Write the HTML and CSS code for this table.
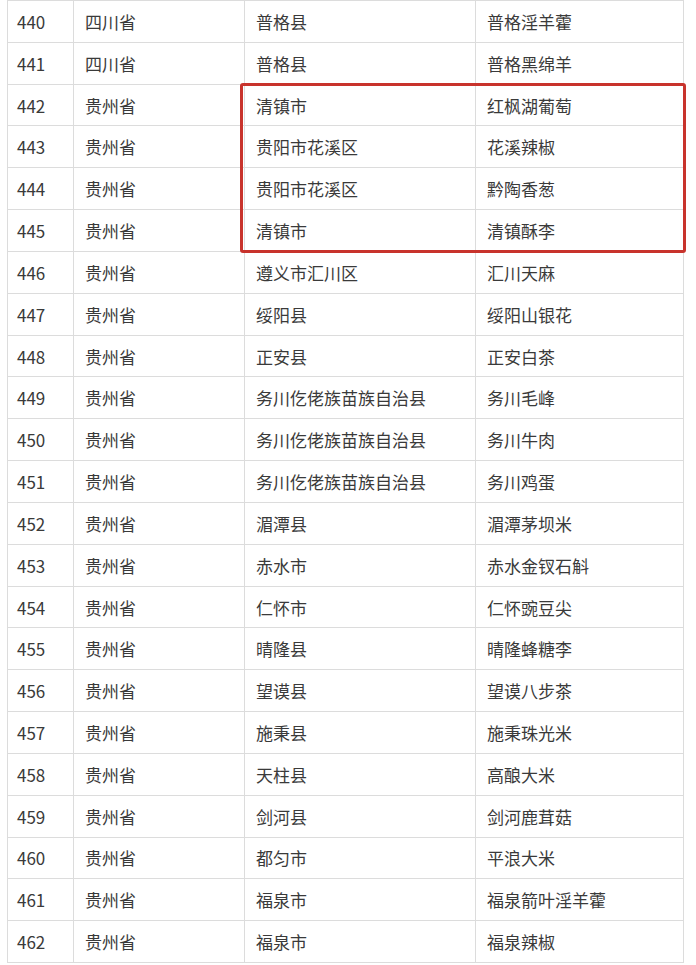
FILE: index.html
```html
<!DOCTYPE html>
<html lang="zh-CN">
<head>
<meta charset="utf-8">
<link rel="stylesheet" href="styles.css">
</head>
<body>
<div class="wrap">
<table class="grid">
<colgroup><col class="c1"><col class="c2"><col class="c3"><col class="c4"></colgroup>
<tbody>
<tr><td>440</td><td>四川省</td><td>普格县</td><td>普格淫羊藿</td></tr>
<tr><td>441</td><td>四川省</td><td>普格县</td><td>普格黑绵羊</td></tr>
<tr><td>442</td><td>贵州省</td><td>清镇市</td><td>红枫湖葡萄</td></tr>
<tr><td>443</td><td>贵州省</td><td>贵阳市花溪区</td><td>花溪辣椒</td></tr>
<tr><td>444</td><td>贵州省</td><td>贵阳市花溪区</td><td>黔陶香葱</td></tr>
<tr><td>445</td><td>贵州省</td><td>清镇市</td><td>清镇酥李</td></tr>
<tr><td>446</td><td>贵州省</td><td>遵义市汇川区</td><td>汇川天麻</td></tr>
<tr><td>447</td><td>贵州省</td><td>绥阳县</td><td>绥阳山银花</td></tr>
<tr><td>448</td><td>贵州省</td><td>正安县</td><td>正安白茶</td></tr>
<tr><td>449</td><td>贵州省</td><td>务川仡佬族苗族自治县</td><td>务川毛峰</td></tr>
<tr><td>450</td><td>贵州省</td><td>务川仡佬族苗族自治县</td><td>务川牛肉</td></tr>
<tr><td>451</td><td>贵州省</td><td>务川仡佬族苗族自治县</td><td>务川鸡蛋</td></tr>
<tr><td>452</td><td>贵州省</td><td>湄潭县</td><td>湄潭茅坝米</td></tr>
<tr><td>453</td><td>贵州省</td><td>赤水市</td><td>赤水金钗石斛</td></tr>
<tr><td>454</td><td>贵州省</td><td>仁怀市</td><td>仁怀豌豆尖</td></tr>
<tr><td>455</td><td>贵州省</td><td>晴隆县</td><td>晴隆蜂糖李</td></tr>
<tr><td>456</td><td>贵州省</td><td>望谟县</td><td>望谟八步茶</td></tr>
<tr><td>457</td><td>贵州省</td><td>施秉县</td><td>施秉珠光米</td></tr>
<tr><td>458</td><td>贵州省</td><td>天柱县</td><td>高酿大米</td></tr>
<tr><td>459</td><td>贵州省</td><td>剑河县</td><td>剑河鹿茸菇</td></tr>
<tr><td>460</td><td>贵州省</td><td>都匀市</td><td>平浪大米</td></tr>
<tr><td>461</td><td>贵州省</td><td>福泉市</td><td>福泉箭叶淫羊藿</td></tr>
<tr><td>462</td><td>贵州省</td><td>福泉市</td><td>福泉辣椒</td></tr>
</tbody>
</table>
<div class="highlight"></div>
</div>
</body>
</html>
```
FILE: styles.css
```css
html, body {
  margin: 0;
  padding: 0;
  background: #ffffff;
}
.wrap {
  position: relative;
  width: 696px;
  height: 965px;
  overflow: hidden;
}
.grid {
  margin-left: 7px;
  margin-top: 0;
  border-collapse: collapse;
  table-layout: fixed;
  width: 676px;
  font-family: "Noto Sans CJK SC", "Noto Sans", sans-serif;
  font-size: 17px;
  color: #3a3a3a;
}
.c1 { width: 66px; }
.c2 { width: 171px; }
.c3 { width: 231px; }
.c4 { width: 208px; }
.grid td {
  border: 1px solid #dcdcdc;
  height: 40.83px;
  padding: 0 0 0 11px;
  vertical-align: middle;
  white-space: nowrap;
  line-height: 1;
}
.grid td:first-child { padding-left: 9px; }
.highlight {
  position: absolute;
  left: 240px;
  top: 83px;
  width: 440px;
  height: 164px;
  border: 3px solid #c8332c;
  border-radius: 3px;
}
```
